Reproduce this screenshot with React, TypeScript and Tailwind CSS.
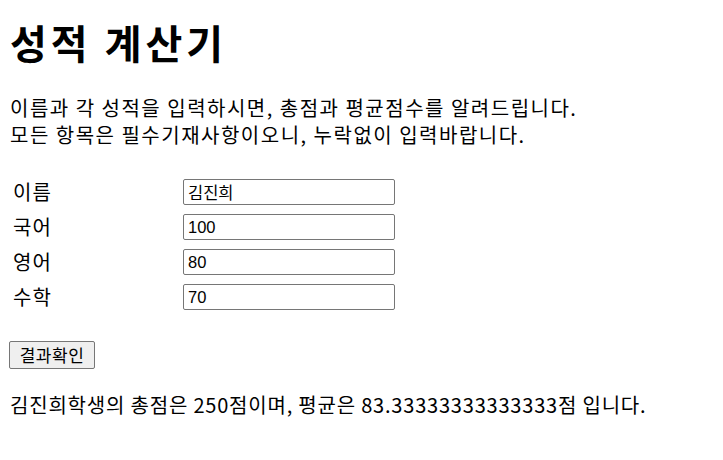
import { useState } from "react";

export default function App() {
  const [name, setName] = useState("김진희");
  const [kor, setKor] = useState("100");
  const [eng, setEng] = useState("80");
  const [math, setMath] = useState("70");

  const total = Number(kor) + Number(eng) + Number(math);
  const avg = total / 3;

  const rows = [
    { label: "이름", value: name, set: setName },
    { label: "국어", value: kor, set: setKor },
    { label: "영어", value: eng, set: setEng },
    { label: "수학", value: math, set: setMath },
  ];

  return (
    <div className="min-h-screen bg-white px-[10px] pt-[14px] text-black font-['Noto_Sans_CJK_KR',sans-serif]">
      <h1 className="text-[40px] font-bold leading-[56px] tracking-[4px]">성적 계산기</h1>

      <p className="mt-[24px] text-[20px] leading-[27px] tracking-[1.5px]">
        이름과 각 성적을 입력하시면, 총점과 평균점수를 알려드립니다.
        <br />
        모든 항목은 필수기재사항이오니, 누락없이 입력바랍니다.
      </p>

      {/* input rows */}
      <div className="mt-[31px] flex flex-col gap-[9px] pl-[3px]">
        {rows.map((r) => (
          <div key={r.label} className="flex items-center">
            <span className="w-[170px] text-[20px] leading-[26px] tracking-[1px]">{r.label}</span>
            <input
              value={r.value}
              onChange={(e) => r.set(e.target.value)}
              className="h-[26px] w-[212px] rounded-[2px] border border-[#767676] px-[4px] text-[16.5px] font-['Liberation_Sans','Noto_Sans_CJK_KR',sans-serif] outline-none"
            />
          </div>
        ))}
      </div>

      <button className="mt-[31px] -ml-[1px] h-[28px] w-[86px] rounded-[2px] border border-[#767676] bg-[#efefef] text-[17px] leading-[26px] tracking-[0.5px]">
        결과확인
      </button>

      <p className="mt-[22px] text-[20px] leading-[27px] tracking-[0.8px]">
        {name}학생의 총점은 {total}점이며, 평균은 {avg}점 입니다.
      </p>
    </div>
  );
}
